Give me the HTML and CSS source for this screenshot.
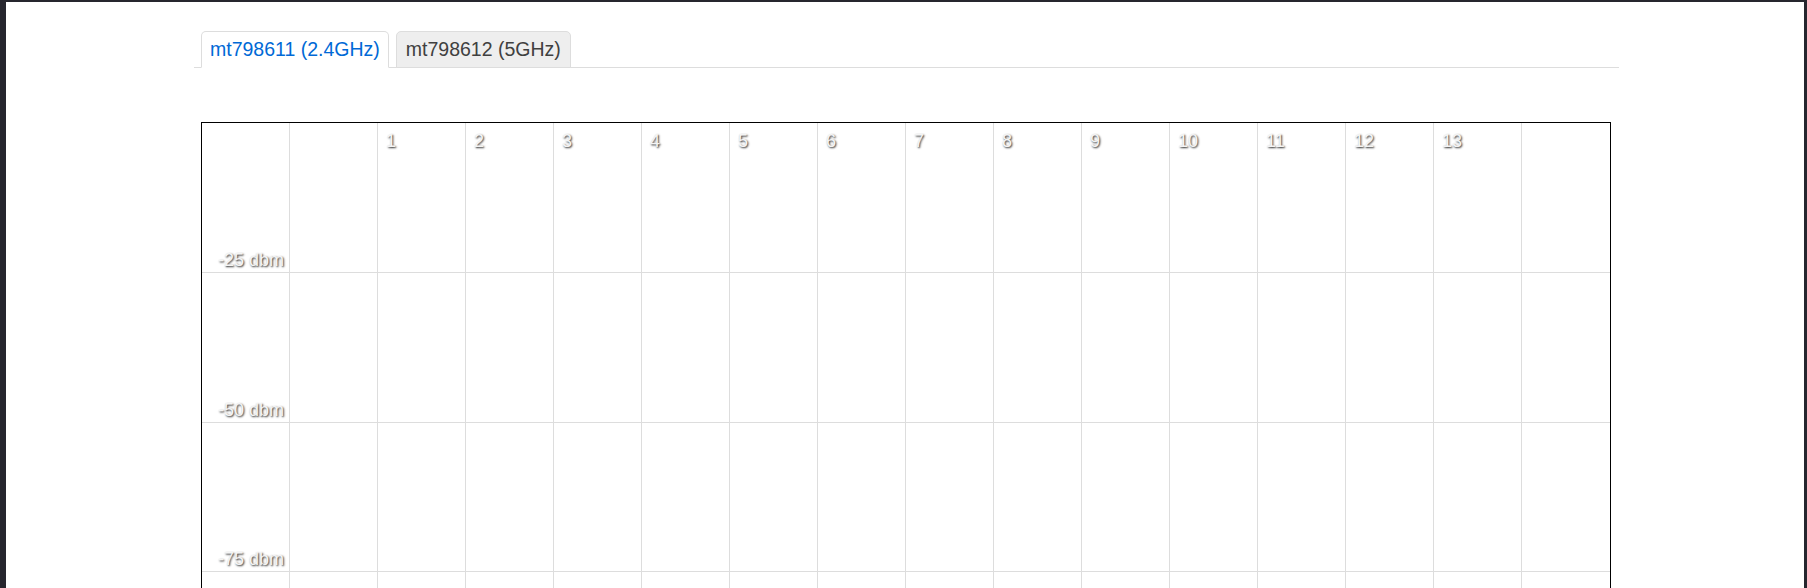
FILE: index.html
```html
<!DOCTYPE html>
<html lang="en">
<head>
<meta charset="utf-8">
<title>Channel Analysis</title>
<link rel="stylesheet" href="styles.css">
</head>
<body>
<div class="page">
  <div class="container">
    <ul class="tabs">
      <li class="tab active"><a>mt798611 (2.4GHz)</a></li>
      <li class="tab"><a>mt798612 (5GHz)</a></li>
    </ul>
    <div class="chart">
      <div class="cell label"><span>-25 dbm</span></div>
      <div class="cell"></div>
      <div class="cell ch"><span>1</span></div>
      <div class="cell ch"><span>2</span></div>
      <div class="cell ch"><span>3</span></div>
      <div class="cell ch"><span>4</span></div>
      <div class="cell ch"><span>5</span></div>
      <div class="cell ch"><span>6</span></div>
      <div class="cell ch"><span>7</span></div>
      <div class="cell ch"><span>8</span></div>
      <div class="cell ch"><span>9</span></div>
      <div class="cell ch"><span>10</span></div>
      <div class="cell ch"><span>11</span></div>
      <div class="cell ch"><span>12</span></div>
      <div class="cell ch"><span>13</span></div>
      <div class="cell last"></div>

      <div class="cell label"><span>-50 dbm</span></div>
      <div class="cell"></div><div class="cell"></div><div class="cell"></div><div class="cell"></div>
      <div class="cell"></div><div class="cell"></div><div class="cell"></div><div class="cell"></div>
      <div class="cell"></div><div class="cell"></div><div class="cell"></div><div class="cell"></div>
      <div class="cell"></div><div class="cell"></div><div class="cell last"></div>

      <div class="cell label"><span>-75 dbm</span></div>
      <div class="cell"></div><div class="cell"></div><div class="cell"></div><div class="cell"></div>
      <div class="cell"></div><div class="cell"></div><div class="cell"></div><div class="cell"></div>
      <div class="cell"></div><div class="cell"></div><div class="cell"></div><div class="cell"></div>
      <div class="cell"></div><div class="cell"></div><div class="cell last"></div>

      <div class="cell"></div>
      <div class="cell"></div><div class="cell"></div><div class="cell"></div><div class="cell"></div>
      <div class="cell"></div><div class="cell"></div><div class="cell"></div><div class="cell"></div>
      <div class="cell"></div><div class="cell"></div><div class="cell"></div><div class="cell"></div>
      <div class="cell"></div><div class="cell"></div><div class="cell last"></div>
    </div>
  </div>
</div>
</body>
</html>
```
FILE: styles.css
```css
html {
  background: #26262e;
  overflow: hidden;
  height: 100%;
}

body {
  margin: 2px 3px 0 6px;
  background: #ffffff;
  min-height: calc(100% - 2px);
  font-family: "Liberation Sans", Arial, sans-serif;
  color: #404040;
}

.page {
  padding-top: 29px;
}

.container {
  margin-left: 188px;
  width: 1425px;
}

.tabs {
  list-style: none;
  margin: 0;
  padding: 0 0 0 7px;
  display: flex;
  border-bottom: 1px solid #dddddd;
}

.tab {
  margin-right: 7px;
  margin-bottom: -1px;
}

.tab a {
  display: block;
  font-size: 19.5px;
  line-height: 22px;
  padding: 6px 9px 7px 9px;
  border: 1px solid #dddddd;
  border-radius: 5px 5px 0 0;
  background: #eeeeee;
  color: #404040;
  white-space: nowrap;
}

.tab.active a {
  padding: 6px 8px 7px 8px;
  background: #ffffff;
  color: #0069d6;
  border-bottom-color: transparent;
}

.chart {
  margin: 54px 0 0 7px;
  width: 1408px;
  border: 1px solid #000000;
  display: grid;
  grid-template-columns: repeat(16, 88px);
  grid-template-rows: 150px 149.5px 149.5px 149.5px;
}

.cell {
  box-sizing: border-box;
  border-right: 1px solid #dddddd;
  border-bottom: 1px solid #dddddd;
  font-size: 18px;
  line-height: 1;
  color: #f4f4f4;
  text-shadow: 1px 1px 2px rgba(0, 0, 0, 0.85);
}

.cell.last {
  border-right: none;
}

.ch {
  padding: 9px 0 0 8px;
}

.label {
  display: flex;
  justify-content: flex-end;
  align-items: flex-end;
  padding: 0 5px 3px 0;
  white-space: nowrap;
}
```
